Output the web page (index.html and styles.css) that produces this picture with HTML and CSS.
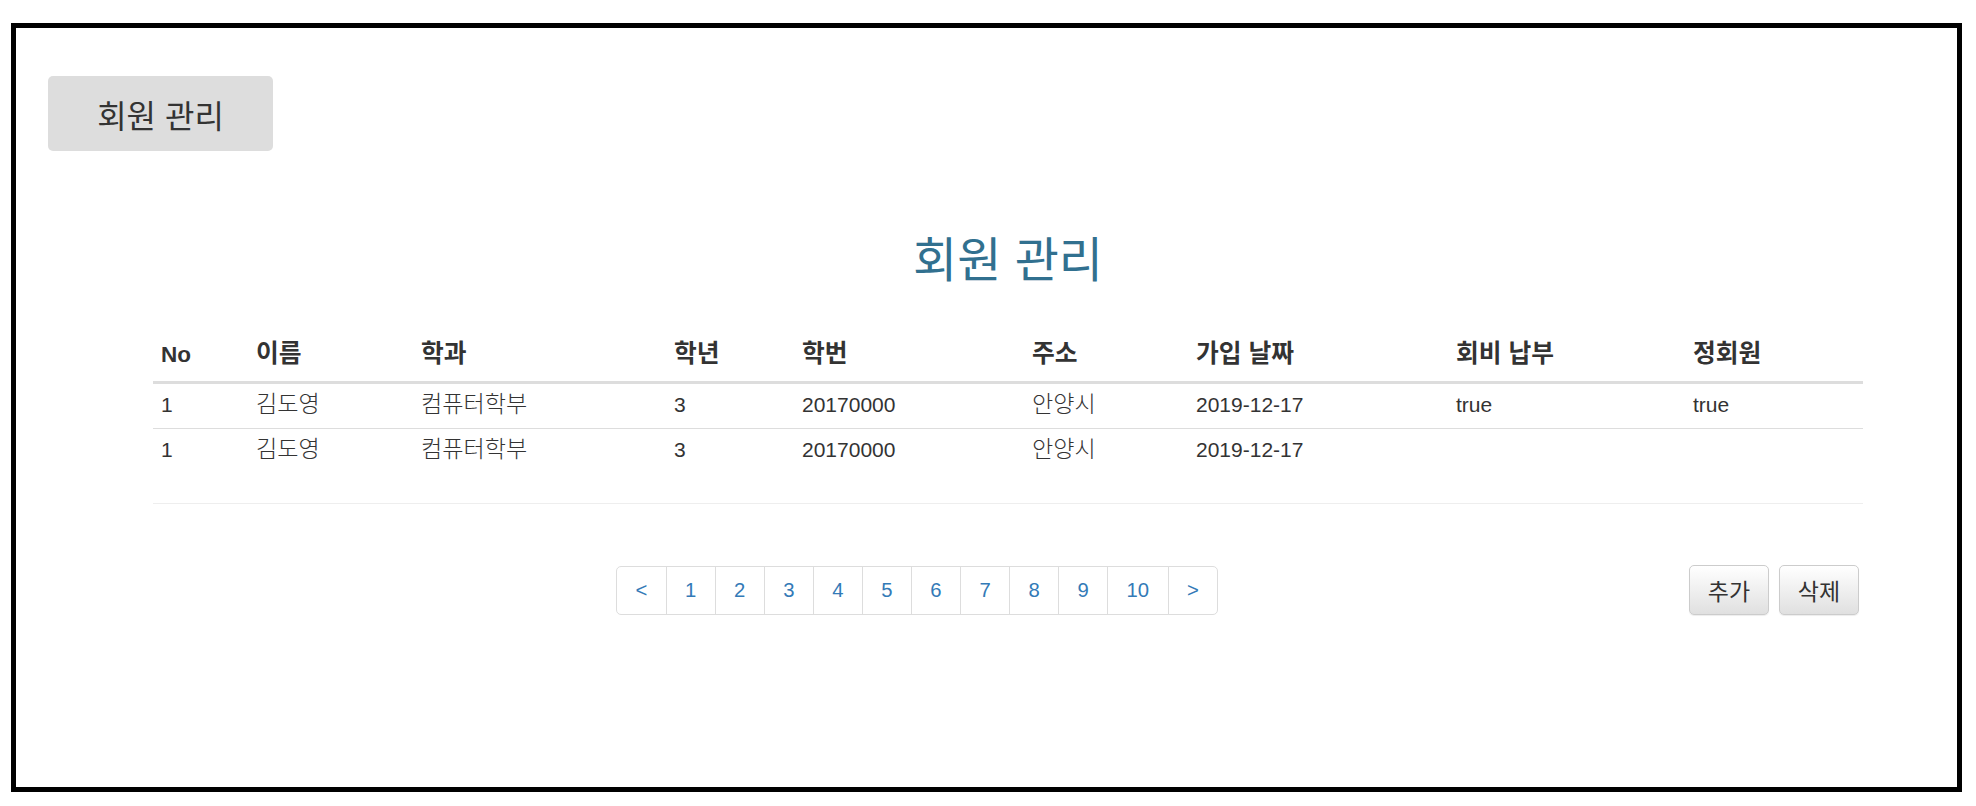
FILE: index.html
```html
<!DOCTYPE html>
<html lang="ko">
<head>
<meta charset="utf-8">
<title>회원 관리</title>
<link rel="stylesheet" href="styles.css">
</head>
<body>
<div class="frame">
  <header class="topbar">
    <div class="nav-tab">회원 관리</div>
  </header>
  <main class="content">
    <h2 class="title">회원 관리</h2>
    <table class="members">
      <colgroup>
        <col class="c-no"><col class="c-name"><col class="c-dept"><col class="c-grade"><col class="c-id"><col class="c-addr"><col class="c-date"><col class="c-fee"><col class="c-reg">
      </colgroup>
      <thead>
        <tr><th>No</th><th><span class="ko">이름</span></th><th><span class="ko">학과</span></th><th><span class="ko">학년</span></th><th><span class="ko">학번</span></th><th><span class="ko">주소</span></th><th><span class="ko">가입 날짜</span></th><th><span class="ko">회비 납부</span></th><th><span class="ko">정회원</span></th></tr>
      </thead>
      <tbody>
        <tr><td>1</td><td><span class="ko">김도영</span></td><td><span class="ko">컴퓨터학부</span></td><td>3</td><td>20170000</td><td><span class="ko">안양시</span></td><td>2019-12-17</td><td>true</td><td>true</td></tr>
        <tr><td>1</td><td><span class="ko">김도영</span></td><td><span class="ko">컴퓨터학부</span></td><td>3</td><td>20170000</td><td><span class="ko">안양시</span></td><td>2019-12-17</td><td></td><td></td></tr>
      </tbody>
    </table>
    <hr class="divider">
    <div class="controls">
      <ul class="pagination">
        <li><a>&lt;</a></li>
        <li><a>1</a></li>
        <li><a>2</a></li>
        <li><a>3</a></li>
        <li><a>4</a></li>
        <li><a>5</a></li>
        <li><a>6</a></li>
        <li><a>7</a></li>
        <li><a>8</a></li>
        <li><a>9</a></li>
        <li><a>10</a></li>
        <li><a>&gt;</a></li>
      </ul>
      <div class="actions">
        <button class="btn">추가</button>
        <button class="btn">삭제</button>
      </div>
    </div>
  </main>
</div>
</body>
</html>
```
FILE: styles.css
```css
* { box-sizing: border-box; }
html, body { margin: 0; padding: 0; background: #fff; }
body {
  font-family: "Liberation Sans", "Noto Sans CJK KR", sans-serif;
  color: #333;
  font-size: 21px;
}
.frame {
  margin: 23px 14px 14px 11px;
  height: 769px;
  border: 5px solid #000;
  background: #fff;
}
.topbar {
  padding: 48px 0 0 32px;
}
.nav-tab {
  display: flex;
  align-items: center;
  justify-content: center;
  width: 225px;
  height: 75px;
  background: #ddd;
  border-radius: 5px;
  font-size: 32px;
  color: #333;
}
.content {
  margin: 0 94px 0 137px;
}
.title {
  margin: 84px 0 0;
  text-align: center;
  font-size: 48px;
  font-weight: 400;
  line-height: 52px;
  color: #31708f;
}
.ko { font-size: 1.1em; line-height: 1; }
.members td .ko { font-weight: 300; }
.members {
  margin-top: 40px;
  width: 100%;
  border-collapse: collapse;
  table-layout: fixed;
  line-height: 30px;
}
.c-no { width: 95px; }
.c-name { width: 165px; }
.c-dept { width: 253px; }
.c-grade { width: 128px; }
.c-id { width: 230px; }
.c-addr { width: 164px; }
.c-date { width: 260px; }
.c-fee { width: 237px; }
.c-reg { width: 178px; }
.members th {
  text-align: left;
  font-weight: 700;
  font-size: 22.5px;
  padding: 13px 8px 11px;
  border-bottom: 3px solid #ddd;
}
.members td {
  padding: 6px 8px 8px;
  border-top: 1px solid #ddd;
  height: 44px;
}
.members tbody tr:first-child td { border-top: none; }
.divider {
  margin: 30px 0 0;
  border: 0;
  border-top: 1px solid #eee;
}
.controls {
  display: flex;
  align-items: center;
  justify-content: space-between;
  margin-top: 61px;
  padding-left: 463px;
  padding-right: 4px;
}
.pagination {
  display: flex;
  list-style: none;
  margin: 0;
  padding: 0;
}
.pagination li a {
  display: block;
  padding: 11px 18.4px;
  line-height: 25px;
  font-size: 20.3px;
  color: #337ab7;
  border: 1px solid #ddd;
  margin-left: -1px;
  background: #fff;
}
.pagination li:first-child a {
  margin-left: 0;
  border-radius: 5px 0 0 5px;
}
.pagination li:last-child a {
  border-radius: 0 5px 5px 0;
}
.actions {
  display: flex;
  gap: 10px;
}
.btn {
  font-family: "Liberation Sans", "Noto Sans CJK KR", sans-serif;
  font-size: 23px;
  color: #333;
  width: 80px;
  height: 50px;
  padding: 0;
  border: 1px solid #ccc;
  border-radius: 5px;
  background: linear-gradient(#fff 0%, #e0e0e0 100%);
  box-shadow: inset 0 1px 0 rgba(255,255,255,.15), 0 1px 1px rgba(0,0,0,.075);
}
```
